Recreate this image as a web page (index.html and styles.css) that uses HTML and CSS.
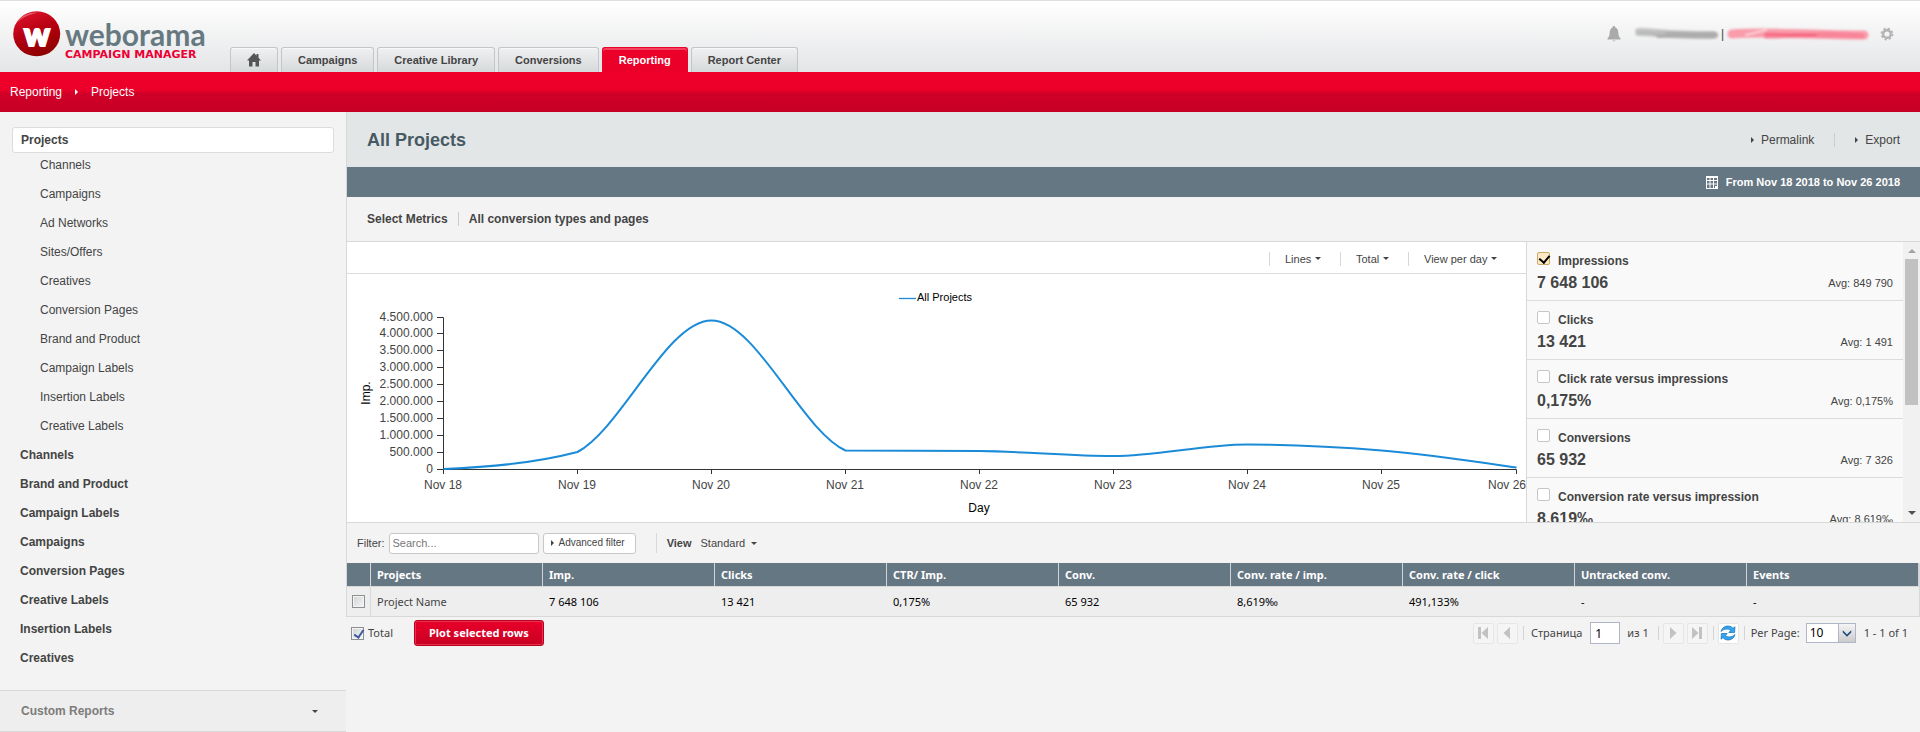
FILE: index.html
```html
<!DOCTYPE html>
<html lang="en">
<head>
<meta charset="utf-8">
<title>Weborama Campaign Manager - Reporting</title>
<link rel="stylesheet" href="styles.css">
</head>
<body>
<header class="header">
  <a class="logo" href="#">
    <svg class="logo-mark" width="48" height="46" viewBox="0 0 48 46" aria-hidden="true">
      <defs>
        <linearGradient id="ball" x1="0.2" y1="0" x2="0.6" y2="1">
          <stop offset="0" stop-color="#e0142c"/><stop offset="0.45" stop-color="#b80012"/><stop offset="1" stop-color="#8c0000"/>
        </linearGradient>
      </defs>
      <ellipse cx="23.700" cy="22.800" rx="23.500" ry="22.500" fill="url(#ball)"/>
      <path d="M4 12C8 4 17 1 25 1.500C18 3 9 6 4 12Z" fill="#f08c96" opacity=".6"/>
      <text class="logo-w" x="24" y="35" text-anchor="middle">w</text>
    </svg>
    <span class="logo-words"><span class="logo-name">weborama</span><span class="logo-sub">CAMPAIGN MANAGER</span></span>
  </a>
  <nav class="tabs" aria-label="Main">
    <a class="tab tab-home" href="#" aria-label="Home"><svg width="14" height="14" viewBox="0 0 14 14"><path d="M7 0L0 7.500H2V13.500H5.500V9H8.500V13.500H12V7.500H14L11.500 4.800V1H9.500V2.700Z" fill="#555"/></svg></a>
    <a class="tab" href="#">Campaigns</a>
    <a class="tab" href="#">Creative Library</a>
    <a class="tab" href="#">Conversions</a>
    <a class="tab tab-active" href="#" aria-current="page">Reporting</a>
    <a class="tab" href="#">Report Center</a>
  </nav>
  <div class="account">
    <svg class="bell" width="14" height="16" viewBox="0 0 14 16" aria-hidden="true"><path d="M7 0C8 0 8.300 .7 8.300 1.500C10.500 2.200 11.200 4.300 11.300 6.500C11.400 9.500 12 11 13.500 12.500V13.500H.5V12.500C2 11 2.600 9.500 2.700 6.500C2.800 4.300 3.500 2.200 5.700 1.500C5.700 .7 6 0 7 0ZM5.300 14.500H8.700C8.500 15.600 5.500 15.600 5.300 14.500Z" fill="#aaa"/></svg>
    <svg class="smudge" width="84" height="14" viewBox="0 0 84 14" aria-hidden="true"><g fill="none" stroke-linecap="round"><path d="M4 5C20 5 30 8 78 8" stroke="#c4c4c4" stroke-width="8"/><path d="M24 8C40 7 60 9 80 8" stroke="#adadad" stroke-width="6"/><path d="M4 6C12 4 16 8 30 6" stroke="#b9b9b9" stroke-width="3"/></g></svg>
    <span class="bar">|</span>
    <svg class="smudge" width="144" height="14" viewBox="0 0 144 14" aria-hidden="true"><g fill="none" stroke-linecap="round"><path d="M6 7C40 4 80 8 138 8" stroke="#f99dab" stroke-width="9"/><path d="M40 9C70 9 100 6 136 9" stroke="#f88498" stroke-width="5"/><path d="M20 8L40 3" stroke="#fbd3da" stroke-width="2"/><path d="M40 7C60 8 80 8 90 8" stroke="#f4627c" stroke-width="2"/></g></svg>
    <svg class="gear" width="14" height="14" viewBox="0 0 14 14" aria-hidden="true"><g stroke="#b3b3b3" fill="none"><circle cx="7" cy="7" r="3.800" stroke-width="2.400"/><circle cx="7" cy="7" r="5.500" stroke-width="1.800" stroke-dasharray="2.300 2.020"/></g></svg>
  </div>
</header>

<nav class="crumbs" aria-label="Breadcrumb">
  <a href="#">Reporting</a><i class="arrow"></i><a href="#">Projects</a>
</nav>

<div class="body">
  <aside class="sidebar">
    <a class="side-current" href="#">Projects</a>
    <ul class="side-list">
      <li class="child"><a href="#">Channels</a></li>
      <li class="child"><a href="#">Campaigns</a></li>
      <li class="child"><a href="#">Ad Networks</a></li>
      <li class="child"><a href="#">Sites/Offers</a></li>
      <li class="child"><a href="#">Creatives</a></li>
      <li class="child"><a href="#">Conversion Pages</a></li>
      <li class="child"><a href="#">Brand and Product</a></li>
      <li class="child"><a href="#">Campaign Labels</a></li>
      <li class="child"><a href="#">Insertion Labels</a></li>
      <li class="child"><a href="#">Creative Labels</a></li>
      <li><a href="#">Channels</a></li>
      <li><a href="#">Brand and Product</a></li>
      <li><a href="#">Campaign Labels</a></li>
      <li><a href="#">Campaigns</a></li>
      <li><a href="#">Conversion Pages</a></li>
      <li><a href="#">Creative Labels</a></li>
      <li><a href="#">Insertion Labels</a></li>
      <li><a href="#">Creatives</a></li>
    </ul>
    <button class="custom" type="button">Custom Reports<i class="caret"></i></button>
  </aside>

  <main class="main">
    <div class="report">
      <div class="title-row">
        <h1>All Projects</h1>
        <div class="title-links"><a href="#"><i class="arrow"></i>Permalink</a><a href="#"><i class="arrow"></i>Export</a></div>
      </div>
      <div class="date-row">
        <button class="date" type="button">
          <svg width="12" height="13" viewBox="0 0 12 13" aria-hidden="true"><path d="M0 0H12V13H0Z" fill="#fff"/><path d="M1 2H11V12H1Z" fill="#667784"/><path d="M1 4.500H11M1 8H11M4 2V12M7.500 2V12" stroke="#fff"/><path d="M9 10H11V12H9Z" fill="#fff"/></svg>
          From Nov 18 2018 to Nov 26 2018
        </button>
      </div>
      <div class="metric-row"><a href="#">Select Metrics</a><a href="#">All conversion types and pages</a></div>

      <section class="panel">
        <div class="chart">
          <div class="chart-tools">
            <span class="menu"><select aria-label="Chart type"><option>Lines</option></select><i class="caret"></i></span>
            <span class="menu"><select aria-label="Aggregation"><option>Total</option></select><i class="caret"></i></span>
            <span class="menu"><select aria-label="Period"><option>View per day</option></select><i class="caret"></i></span>
          </div>
          <svg class="plot" viewBox="0 0 1179 248" role="img" aria-label="Impressions per day">
            <path d="M552 24.500H569" stroke="#1b8bd8" stroke-width="1.300"/>
            <text class="legend" x="570" y="27">All Projects</text>
            <g class="axis">
              <path d="M90 43.500H96.500V195.500H1169.500V200"/>
              <path d="M90 59.500H96M90 76.500H96M90 93.500H96M90 110.500H96M90 127.500H96M90 144.500H96M90 161.500H96M90 178.500H96M90 195.500H96"/>
              <path d="M96.500 195V200M230.500 195V200M364.500 195V200M498.500 195V200M632.500 195V200M766.500 195V200M900.500 195V200M1034.500 195V200"/>
            </g>
            <path class="line" d="M96.500 195C141 193 186 189.500 230.500 178C275 154 320 46.500 364.500 46.500C409 46.500 454 156 498.500 176.500C543 176.700 588 176.500 632.500 177C677 177.400 722 182 766.500 182C811 182 856 170.500 900.500 170.500C945 170.500 990 172.700 1034.500 176.500C1080 180.300 1124.500 187 1169.500 193.500"/>
            <g class="ticks" text-anchor="end">
              <text x="86" y="47">4.500.000</text><text x="86" y="63">4.000.000</text><text x="86" y="80">3.500.000</text><text x="86" y="97">3.000.000</text><text x="86" y="114">2.500.000</text><text x="86" y="131">2.000.000</text><text x="86" y="148">1.500.000</text><text x="86" y="165">1.000.000</text><text x="86" y="182">500.000</text><text x="86" y="199">0</text>
              <text x="1179" y="215">Nov 26</text>
            </g>
            <g class="ticks" text-anchor="middle">
              <text x="96" y="215">Nov 18</text><text x="230" y="215">Nov 19</text><text x="364" y="215">Nov 20</text><text x="498" y="215">Nov 21</text><text x="632" y="215">Nov 22</text><text x="766" y="215">Nov 23</text><text x="900" y="215">Nov 24</text><text x="1034" y="215">Nov 25</text>
            </g>
            <g class="axis-name" text-anchor="middle"><text x="632" y="238">Day</text><text transform="translate(23 119) rotate(-90)">Imp.</text></g>
          </svg>
        </div>
        <div class="metrics">
          <div class="metric-list">
            <div class="metric"><label><input type="checkbox" checked>Impressions</label><p><b>7 648 106</b><span>Avg: 849 790</span></p></div>
            <div class="metric"><label><input type="checkbox">Clicks</label><p><b>13 421</b><span>Avg: 1 491</span></p></div>
            <div class="metric"><label><input type="checkbox">Click rate versus impressions</label><p><b>0,175%</b><span>Avg: 0,175%</span></p></div>
            <div class="metric"><label><input type="checkbox">Conversions</label><p><b>65 932</b><span>Avg: 7 326</span></p></div>
            <div class="metric"><label><input type="checkbox">Conversion rate versus impression</label><p><b>8,619‰</b><span>Avg: 8,619‰</span></p></div>
          </div>
          <div class="scroll" aria-hidden="true"><i class="scroll-up"></i><i class="scroll-thumb"></i><i class="scroll-down"></i></div>
        </div>
      </section>

      <div class="filter">
        <label for="q">Filter:</label>
        <input id="q" type="text" placeholder="Search...">
        <button class="advanced" type="button"><i class="arrow"></i>Advanced filter</button>
        <span class="view"><label for="view">View</label><span class="menu-plain"><select id="view"><option>Standard</option></select><i class="caret"></i></span></span>
      </div>

      <table class="grid">
        <thead><tr><th class="check-col"></th><th>Projects</th><th>Imp.</th><th>Clicks</th><th>CTR/ Imp.</th><th>Conv.</th><th>Conv. rate / imp.</th><th>Conv. rate / click</th><th>Untracked conv.</th><th>Events</th></tr></thead>
        <tbody><tr><td class="check-col"><input class="box" type="checkbox" aria-label="Select Project Name"></td><td class="name">Project Name</td><td>7 648 106</td><td>13 421</td><td>0,175%</td><td>65 932</td><td>8,619‰</td><td>491,133%</td><td>-</td><td>-</td></tr></tbody>
      </table>
    </div>

    <div class="footer">
      <label class="total"><input class="box" type="checkbox" checked>Total</label>
      <button class="plot-btn" type="button">Plot selected rows</button>
      <div class="pager">
        <button type="button" class="pg" aria-label="First page"><svg width="12" height="12" viewBox="0 0 12 12"><path d="M1 0H4V12H1ZM11 0V12L4.500 6Z"/></svg></button>
        <button type="button" class="pg" aria-label="Previous page"><svg width="12" height="12" viewBox="0 0 12 12"><path d="M9 0V12L2.500 6Z"/></svg></button>
        <i class="sep"></i>
        <label class="page-label" for="page">Страница</label>
        <input id="page" class="page" type="text" value="1">
        <span class="page-of">из 1</span>
        <i class="sep"></i>
        <button type="button" class="pg" aria-label="Next page"><svg width="12" height="12" viewBox="0 0 12 12"><path d="M3 0V12L9.500 6Z"/></svg></button>
        <button type="button" class="pg" aria-label="Last page"><svg width="12" height="12" viewBox="0 0 12 12"><path d="M1 0V12L7.500 6ZM8 0H11V12H8Z"/></svg></button>
        <i class="sep"></i>
        <button type="button" class="pg pg-refresh" aria-label="Refresh"><svg width="16" height="16" viewBox="0 0 16 16"><g stroke="#1272bd" stroke-width=".7" stroke-linejoin="round"><path d="M1 6.500C2 2.500 5.500 .8 8.500 1C10.600 1.200 12 2.200 13 3.300L15 1.800L14.600 7.500H8.800L10.600 5.500C8.300 3.400 4 3.600 1 6.500Z"/><path d="M15 9.500C14 13.500 10.500 15.200 7.500 15C5.400 14.800 4 13.800 3 12.700L1 14.200L1.400 8.500H7.200L5.400 10.500C7.700 12.600 12 12.400 15 9.500Z"/></g></svg></button>
        <i class="sep"></i>
        <label class="per-label" for="per">Per Page:</label>
        <span class="per"><select id="per"><option>10</option></select><svg width="17" height="18" viewBox="0 0 17 18" aria-hidden="true"><path d="M4 6L8.500 10.500L13 6V8.500L8.500 13L4 8.500Z" fill="#1d4a7d"/></svg></span>
        <span class="range">1 - 1 of 1</span>
      </div>
    </div>
  </main>
</div>
</body>
</html>
```
FILE: styles.css
```css
* { box-sizing: border-box; }
body { margin: 0; background: #f3f3f3; color: #444; font: 12px/14px "Liberation Sans", Arial, sans-serif; }
a { color: inherit; text-decoration: none; }
svg { display: block; flex: none; }
button, input, select { font: inherit; color: inherit; margin: 0; }
select { appearance: none; border: 0; background: transparent; padding: 0; }
h1, p, ul { margin: 0; padding: 0; list-style: none; }

.arrow { flex: none; width: 0; height: 0; border: 3px solid transparent; border-left-color: currentColor; border-right: 0; }
.caret { flex: none; width: 0; height: 0; border: 3px solid transparent; border-top-color: #444; border-bottom: 0; }

.header { display: flex; align-items: flex-end; height: 72px; border-top: 1px solid #dfdfdf; background: linear-gradient(#fff, #e4e5e7); }
.logo { display: flex; align-self: flex-start; width: 230px; padding: 10px 0 0 13px; }
.logo-w { font: 900 32px Lato, sans-serif; fill: #fff; stroke: #fff; stroke-width: 2px; }
.logo-words { display: flex; flex-direction: column; padding: 8px 0 0 4px; }
.logo-name { font: 700 30px/30px Lato, sans-serif; color: #667980; }
.logo-sub { font: bold 11px/12px "DejaVu Sans", sans-serif; color: #ed0033; white-space: nowrap; }

.tabs { display: flex; gap: 3px; }
.tab { height: 25px; padding: 0 16px; border: 1px solid #c3c5c7; border-bottom: 0; border-radius: 3px 3px 0 0; background: linear-gradient(#eff0f1, #d6d9da); font-size: 11px; line-height: 25px; font-weight: bold; box-shadow: inset 0 1px #f8f8f8; white-space: nowrap; }
.tab-home { display: flex; align-items: center; width: 48px; }
.tab-active { border-color: #eb0029; background: #eb0029; color: #fff; box-shadow: inset 0 2px #f3415c; }

.account { display: flex; align-items: center; align-self: flex-start; margin-left: auto; padding: 24px 26px 0 0; height: 42px; }
.bell { margin-right: 14px; }
.smudge { filter: blur(1px); }
.bar { padding: 0 2px; }
.gear { margin-left: 10px; }

.crumbs { display: flex; align-items: center; gap: 13px; height: 40px; padding-left: 10px; background: linear-gradient(#ee002a 0, #eb0029 45%, #cf0027 55%, #c70025 100%); color: #fff; }

.body { display: flex; align-items: flex-start; }
.sidebar { flex: none; width: 346px; padding-top: 15px; }
.side-current { display: block; margin: 0 12px; padding: 5px 8px; border: 1px solid #dcdcdc; border-radius: 3px; background: #fff; font-weight: bold; }
.side-list { display: flex; flex-direction: column; gap: 15px; padding: 5px 20px 25px; }
.side-list li { font-weight: bold; }
.side-list .child { padding-left: 20px; font-weight: normal; }
.custom { display: flex; align-items: center; justify-content: space-between; width: 100%; height: 42px; padding: 0 28px 0 21px; border: 1px solid #d9d9d9; border-width: 1px 0; background: #eee; color: #7c7c7c; font-weight: bold; }

.main { flex: 1; min-width: 0; }
.report { border-left: 1px solid #d8d8d8; }
.title-row { display: flex; align-items: center; justify-content: space-between; height: 55px; padding: 0 20px; background: #e2e6e7; }
h1 { color: #475a63; font-size: 18px; line-height: 20px; }
.title-links { display: flex; }
.title-links a { display: flex; align-items: center; gap: 7px; }
.title-links a + a { margin-left: 20px; padding-left: 20px; border-left: 1px solid #cbcfd0; }
.date-row { display: flex; justify-content: flex-end; height: 30px; padding: 0 20px; background: #667784; }
.date { display: flex; align-items: center; gap: 8px; padding: 0; border: 0; background: none; color: #fff; font-size: 11px; font-weight: bold; }
.metric-row { display: flex; align-items: center; height: 44px; padding: 0 20px; font-weight: bold; }
.metric-row a + a { margin-left: 10px; padding-left: 10px; border-left: 1px solid #ccc; }

.panel { display: flex; border: 1px solid #d8d8d8; border-width: 1px 0; background: #fff; }
.chart { flex: 1; min-width: 0; }
.chart-tools { display: flex; align-items: center; justify-content: flex-end; gap: 19px; height: 32px; padding: 2px 29px 0 0; border-bottom: 1px solid #dcdcdc; }
.menu, .menu-plain { display: flex; align-items: center; gap: 5px; font-size: 11px; }
.menu { gap: 3px; padding-left: 15px; border-left: 1px solid #d8d8d8; }
.plot { width: 100%; height: auto; }
.plot text { font-size: 12px; fill: #444; }
.plot .legend { font-size: 11px; fill: #000; }
.plot .axis-name text { fill: #000; }
.axis { fill: none; stroke: #333; }
.line { fill: none; stroke: #1b8bd8; stroke-width: 2px; }

.metrics { flex: none; display: flex; width: 394px; border-left: 1px solid #d8d8d8; background: #f9f9f9; }
.metric-list { flex: 1; height: 280px; overflow-y: auto; scrollbar-width: none; }
.metric { height: 59px; padding: 10px; border-bottom: 1px solid #dcdcdc; }
.metric label { display: flex; gap: 8px; line-height: 18px; font-weight: bold; }
.metric input { appearance: none; flex: none; width: 13px; height: 13px; border: 1px solid #c6c6c6; border-radius: 2px; background: #fff; }
.metric input:checked { border-color: #c9a96a; background: #fdeac5; }
.metric input:checked::after { content: ""; display: block; width: 5px; height: 8px; margin: 0 0 0 3px; border: solid #000; border-width: 0 2px 2px 0; transform: rotate(40deg); }
.metric p { display: flex; align-items: center; justify-content: space-between; height: 26px; }
.metric b { font-size: 16px; line-height: 24px; }
.metric span { font-size: 11px; }
.scroll { display: flex; flex-direction: column; align-items: center; width: 17px; background: #f1f1f1; }
.scroll-up { margin: 7px 0 6px; border: 4px solid transparent; border-top: 0; border-bottom-color: #a3a3a3; }
.scroll-thumb { width: 13px; height: 146px; background: #c1c1c1; }
.scroll-down { margin: auto 0 7px; border: 4px solid transparent; border-bottom: 0; border-top-color: #505050; }

.filter { display: flex; align-items: center; gap: 4px; height: 40px; padding-left: 10px; font-size: 11px; }
.filter input { width: 150px; height: 21px; padding: 0 3px; border: 1px solid #c8c8c8; border-radius: 3px; background: #fff; }
.filter input::placeholder { color: #777; }
.advanced { display: flex; align-items: center; gap: 5px; height: 21px; padding: 0 10px 0 7px; border: 1px solid #c8c8c8; border-radius: 3px; background: #fff; font-size: 10px; }
.view { display: flex; align-items: center; gap: 9px; height: 20px; margin-left: 16px; padding-left: 10px; border-left: 1px solid #d8d8d8; }
.view label { font-weight: bold; }

.grid { width: 100%; border-collapse: separate; border-spacing: 0; border-right: 1px solid #d8d8d8; table-layout: fixed; font: 11px/14px "Noto Sans", Tahoma, sans-serif; }
.grid th { height: 24px; padding: 0 6px; border-right: 1px solid #cfd4d8; border-bottom: 1px solid #d8d8d8; background: #667784; color: #fff; text-align: left; white-space: nowrap; }
.grid td { height: 30px; padding: 0 6px; border-bottom: 1px solid #d8d8d8; background: #eee; color: #000; }
.grid .check-col { width: 24px; padding: 0 5px; border-right: 1px solid #d8d8d8; }
.grid .name { color: #444; }
.box { appearance: none; display: block; width: 13px; height: 13px; border: 1px solid #8e8f8f; background: linear-gradient(135deg, #cfd3d7, #f6f6f6); box-shadow: inset 0 0 0 1px #f4f4f4; }
.box:checked::after { content: ""; display: block; width: 4px; height: 8px; margin: 0 0 0 4px; border: solid #3d59a0; border-width: 0 2px 2px 0; transform: rotate(35deg); }

.footer { display: flex; align-items: center; padding: 3px 12px 0 5px; font: 11px/14px "Noto Sans", Tahoma, sans-serif; }
.total { display: flex; align-items: center; gap: 4px; width: 63px; }
.plot-btn { height: 26px; padding: 0 14px; border: 1px solid #b8001f; border-radius: 3px; background: linear-gradient(#e90029, #c80023); box-shadow: inset 0 0 0 1px #e8304f; color: #fff; font-weight: bold; white-space: nowrap; }
.pager { display: flex; align-items: center; margin-left: auto; white-space: nowrap; }
.pg { display: flex; align-items: center; justify-content: center; width: 21px; height: 21px; margin-right: 3px; padding: 0; border: 1px solid #e6e6e6; border-radius: 2px; background: #f5f5f5; }
.pg path { fill: #c2c2c2; }
.pg-refresh { background: #fff; }
.pg-refresh path { fill: #35a4ea; }
.sep { width: 1px; height: 14px; margin: 0 4px 0 2px; background: #d4d4d4; }
.page { width: 30px; height: 22px; padding: 0 4px; border: 1px solid #b0b5c8; background: #fff; color: #000; font-size: 12px; }
.page-label { padding: 0 8px 0 3px; }
.page-of { padding: 0 7px; }
.per-label { padding-left: 2px; }
.per { display: flex; align-items: stretch; width: 50px; height: 20px; margin: 0 8px 0 6px; border: 1px solid #b0b5c8; background: #fff; }
.per select { flex: 1; padding-left: 3px; color: #000; font-size: 12px; }
.per svg { border-left: 1px solid #b0b5c8; background: linear-gradient(#f4f4f4, #ccc); }
```
